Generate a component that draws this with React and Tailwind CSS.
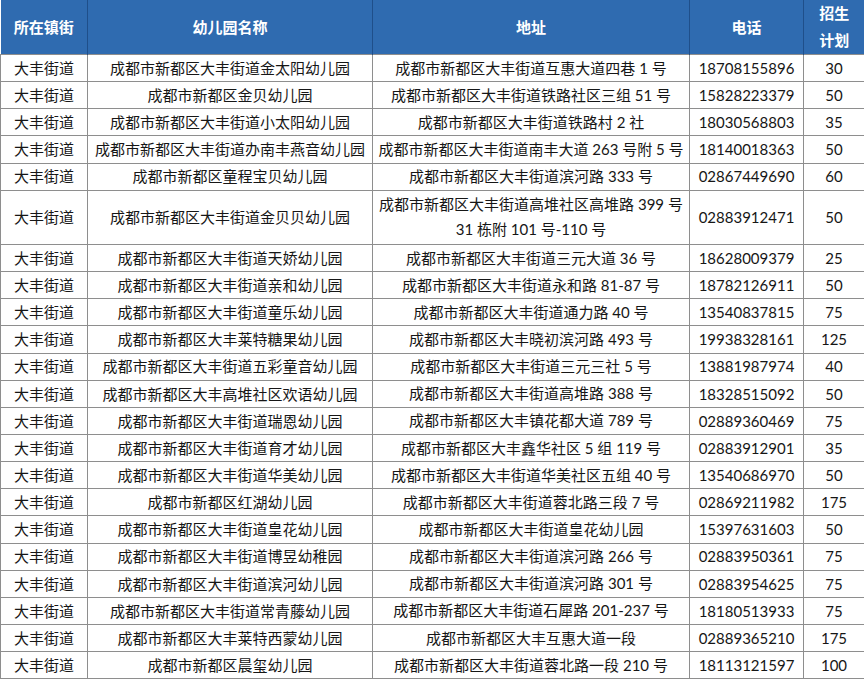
import React from 'react';

const rows = [
  ['成都市新都区大丰街道金太阳幼儿园', '成都市新都区大丰街道互惠大道四巷 1 号', '18708155896', '30'],
  ['成都市新都区金贝幼儿园', '成都市新都区大丰街道铁路社区三组 51 号', '15828223379', '50'],
  ['成都市新都区大丰街道小太阳幼儿园', '成都市新都区大丰街道铁路村 2 社', '18030568803', '35'],
  ['成都市新都区大丰街道办南丰燕音幼儿园', '成都市新都区大丰街道南丰大道 263 号附 5 号', '18140018363', '50'],
  ['成都市新都区童程宝贝幼儿园', '成都市新都区大丰街道滨河路 333 号', '02867449690', '60'],
  ['成都市新都区大丰街道金贝贝幼儿园', ['成都市新都区大丰街道高堆社区高堆路 399 号', '31 栋附 101 号-110 号'], '02883912471', '50'],
  ['成都市新都区大丰街道天娇幼儿园', '成都市新都区大丰街道三元大道 36 号', '18628009379', '25'],
  ['成都市新都区大丰街道亲和幼儿园', '成都市新都区大丰街道永和路 81-87 号', '18782126911', '50'],
  ['成都市新都区大丰街道童乐幼儿园', '成都市新都区大丰街道通力路 40 号', '13540837815', '75'],
  ['成都市新都区大丰莱特糖果幼儿园', '成都市新都区大丰晓初滨河路 493 号', '19938328161', '125'],
  ['成都市新都区大丰街道五彩童音幼儿园', '成都市新都区大丰街道三元三社 5 号', '13881987974', '40'],
  ['成都市新都区大丰高堆社区欢语幼儿园', '成都市新都区大丰街道高堆路 388 号', '18328515092', '50'],
  ['成都市新都区大丰街道瑞恩幼儿园', '成都市新都区大丰镇花都大道 789 号', '02889360469', '75'],
  ['成都市新都区大丰街道育才幼儿园', '成都市新都区大丰鑫华社区 5 组 119 号', '02883912901', '35'],
  ['成都市新都区大丰街道华美幼儿园', '成都市新都区大丰街道华美社区五组 40 号', '13540686970', '50'],
  ['成都市新都区红湖幼儿园', '成都市新都区大丰街道蓉北路三段 7 号', '02869211982', '175'],
  ['成都市新都区大丰街道皇花幼儿园', '成都市新都区大丰街道皇花幼儿园', '15397631603', '50'],
  ['成都市新都区大丰街道博昱幼稚园', '成都市新都区大丰街道滨河路 266 号', '02883950361', '75'],
  ['成都市新都区大丰街道滨河幼儿园', '成都市新都区大丰街道滨河路 301 号', '02883954625', '75'],
  ['成都市新都区大丰街道常青藤幼儿园', '成都市新都区大丰街道石犀路 201-237 号', '18180513933', '75'],
  ['成都市新都区大丰莱特西蒙幼儿园', '成都市新都区大丰互惠大道一段', '02889365210', '175'],
  ['成都市新都区晨玺幼儿园', '成都市新都区大丰街道蓉北路一段 210 号', '18113121597', '100'],
];

const font = { fontFamily: 'Lato, "Noto Sans CJK SC", sans-serif' };

function App() {
  return (
    <div className="w-[864px] h-[680px] overflow-hidden bg-white" style={font}>
      <table className="w-[864px] table-fixed border-collapse text-[15px] text-[#161616]">
        <colgroup>
          <col className="w-[87px]" />
          <col className="w-[285px]" />
          <col className="w-[317px]" />
          <col className="w-[114px]" />
          <col className="w-[61px]" />
        </colgroup>
        <thead>
          <tr className="h-[53px] bg-[#2f6bb0] text-white font-bold">
            <th className="border-r border-[#1f4f8a] text-center">所在镇街</th>
            <th className="border-r border-[#1f4f8a] text-center">幼儿园名称</th>
            <th className="border-r border-[#1f4f8a] text-center">地址</th>
            <th className="border-r border-[#1f4f8a] text-center">电话</th>
            <th className="text-center leading-[27px]">
              <div>招生</div>
              <div>计划</div>
            </th>
          </tr>
        </thead>
        <tbody>
          {rows.map(([name, addr, phone, plan], i) => (
            <tr key={i} className={Array.isArray(addr) ? 'h-[54.3px]' : 'h-[27.15px]'}>
              <td className="border border-[#8e8e8e] text-center whitespace-nowrap">大丰街道</td>
              <td className="border border-[#8e8e8e] text-center whitespace-nowrap">{name}</td>
              <td className="border border-[#8e8e8e] text-center whitespace-nowrap leading-[25px]">
                {Array.isArray(addr) ? addr.map((a) => <div key={a}>{a}</div>) : addr}
              </td>
              <td className="border border-[#8e8e8e] text-center whitespace-nowrap">{phone}</td>
              <td className="border border-[#8e8e8e] text-center">{plan}</td>
            </tr>
          ))}
        </tbody>
      </table>
    </div>
  );
}

export default App;
